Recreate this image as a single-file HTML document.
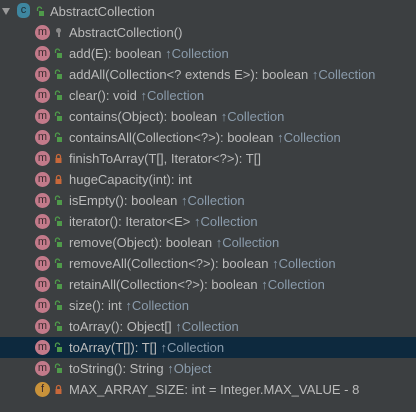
<!DOCTYPE html>
<html><head><meta charset="utf-8"><style>
body{margin:0;width:416px;height:412px;background:#3c3f41;overflow:hidden;font-family:"Liberation Sans","Noto Sans CJK SC",sans-serif;font-size:13px;color:#bbbbbb;position:relative}
.r{position:absolute;left:0;width:416px;height:21px;line-height:21px}
.sel{background:#0d293e}
.m{position:absolute;left:35px;top:3px;width:15px;height:15px;border-radius:50%;background:#c37a8a;color:#3a2a2e;font-size:11px;line-height:14px;text-align:center}
svg.l{position:absolute;left:54px;top:5px}
.t{position:absolute;left:69px;top:0;white-space:nowrap}
.u{color:#8a9bab}
</style></head><body>
<svg width="0" height="0" style="position:absolute"><defs>
<g id="go"><path d="M1.5 5V3a2 2 0 0 1 4 0" fill="none" stroke="#4f9a4a" stroke-width="1.3"/><rect x="3" y="5" width="5" height="5" fill="#4f9a4a"/></g>
<g id="pr"><path d="M2.5 5V3.5a2 2 0 0 1 4 0V5" fill="none" stroke="#c8683a" stroke-width="1.3"/><rect x="1.5" y="5" width="6" height="5" fill="#c8683a"/></g>
</defs></svg>
<div class="r" style="top:1px">
<div style="position:absolute;left:2px;top:7px;width:0;height:0;border-left:4px solid transparent;border-right:4px solid transparent;border-top:7px solid #9a9a9a"></div>
<div style="position:absolute;left:17px;top:2px;width:13px;height:15px;border-radius:5px;background:#3e86a0;color:#1d2b33;font-size:11px;line-height:15px;text-align:center">c</div>
<svg class="l" style="left:36px" width="10" height="11"><use href="#go"/></svg>
<div class="t" style="left:50px">AbstractCollection</div></div>
<div class="r" style="top:22px"><div class="m">m</div><div style="position:absolute;left:56px;top:6px;width:5px;height:5px;border-radius:50%;background:#888"></div><div style="position:absolute;left:58px;top:10px;width:2px;height:5px;background:#888"></div><div class="t">AbstractCollection()</div></div>
<div class="r" style="top:43px"><div class="m">m</div><svg class="l" width="10" height="11"><use href="#go"/></svg><div class="t">add(E): boolean <span class="u">↑Collection</span></div></div>
<div class="r" style="top:64px"><div class="m">m</div><svg class="l" width="10" height="11"><use href="#go"/></svg><div class="t">addAll(Collection&lt;? extends E&gt;): boolean <span class="u">↑Collection</span></div></div>
<div class="r" style="top:85px"><div class="m">m</div><svg class="l" width="10" height="11"><use href="#go"/></svg><div class="t">clear(): void <span class="u">↑Collection</span></div></div>
<div class="r" style="top:106px"><div class="m">m</div><svg class="l" width="10" height="11"><use href="#go"/></svg><div class="t">contains(Object): boolean <span class="u">↑Collection</span></div></div>
<div class="r" style="top:127px"><div class="m">m</div><svg class="l" width="10" height="11"><use href="#go"/></svg><div class="t">containsAll(Collection&lt;?&gt;): boolean <span class="u">↑Collection</span></div></div>
<div class="r" style="top:148px"><div class="m">m</div><svg class="l" width="10" height="11"><use href="#pr"/></svg><div class="t">finishToArray(T[], Iterator&lt;?&gt;): T[]</div></div>
<div class="r" style="top:169px"><div class="m">m</div><svg class="l" width="10" height="11"><use href="#pr"/></svg><div class="t">hugeCapacity(int): int</div></div>
<div class="r" style="top:190px"><div class="m">m</div><svg class="l" width="10" height="11"><use href="#go"/></svg><div class="t">isEmpty(): boolean <span class="u">↑Collection</span></div></div>
<div class="r" style="top:211px"><div class="m">m</div><svg class="l" width="10" height="11"><use href="#go"/></svg><div class="t">iterator(): Iterator&lt;E&gt; <span class="u">↑Collection</span></div></div>
<div class="r" style="top:232px"><div class="m">m</div><svg class="l" width="10" height="11"><use href="#go"/></svg><div class="t">remove(Object): boolean <span class="u">↑Collection</span></div></div>
<div class="r" style="top:253px"><div class="m">m</div><svg class="l" width="10" height="11"><use href="#go"/></svg><div class="t">removeAll(Collection&lt;?&gt;): boolean <span class="u">↑Collection</span></div></div>
<div class="r" style="top:274px"><div class="m">m</div><svg class="l" width="10" height="11"><use href="#go"/></svg><div class="t">retainAll(Collection&lt;?&gt;): boolean <span class="u">↑Collection</span></div></div>
<div class="r" style="top:295px"><div class="m">m</div><svg class="l" width="10" height="11"><use href="#go"/></svg><div class="t">size(): int <span class="u">↑Collection</span></div></div>
<div class="r" style="top:316px"><div class="m">m</div><svg class="l" width="10" height="11"><use href="#go"/></svg><div class="t">toArray(): Object[] <span class="u">↑Collection</span></div></div>
<div class="r sel" style="top:337px"><div class="m">m</div><svg class="l" width="10" height="11"><use href="#go"/></svg><div class="t">toArray(T[]): T[] <span class="u">↑Collection</span></div></div>
<div class="r" style="top:358px"><div class="m">m</div><svg class="l" width="10" height="11"><use href="#go"/></svg><div class="t">toString(): String <span class="u">↑Object</span></div></div>
<div class="r" style="top:379px"><div class="m" style="background:#c9923a">f</div><svg class="l" width="10" height="11"><use href="#pr"/></svg><div class="t">MAX_ARRAY_SIZE: int = Integer.MAX_VALUE - 8</div></div>
</body></html>
